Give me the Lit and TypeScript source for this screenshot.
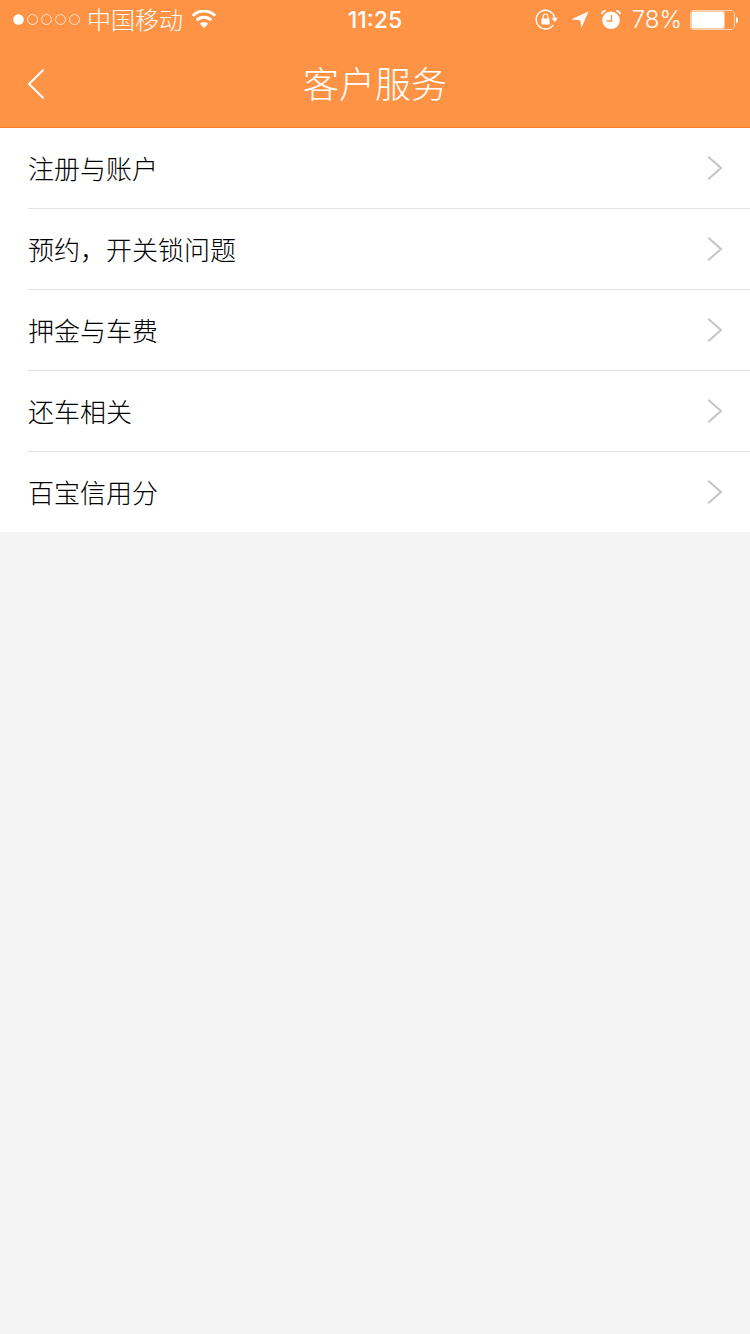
import { LitElement, html, css } from 'lit';
import { customElement, property, state } from 'lit/decorators.js';

@customElement('status-bar')
export class StatusBar extends LitElement {
  static styles = css`
    :host {
      display: grid;
      grid-template-columns: 1fr auto 1fr;
      align-items: center;
      height: 40px;
      padding: 0 12px;
      color: #fff;
      font-size: 24px;
      line-height: 40px;
    }

    .left,
    .right {
      display: flex;
      align-items: center;
    }

    .right {
      justify-content: flex-end;
    }

    .carrier {
      margin: 0 8px 0 6px;
      padding-bottom: 2px;
      font-family: "Noto Sans CJK SC", sans-serif;
      font-weight: 300;
      line-height: 38px;
    }

    .time {
      font-family: Inter, "Liberation Sans", sans-serif;
      font-size: 23px;
      font-weight: 500;
    }

    .percent {
      margin: 0 8px 0 11px;
      font-family: Inter, "Liberation Sans", sans-serif;
      font-weight: 300;
    }

    .arrow {
      margin: 0 12px;
    }

    svg {
      display: block;
      flex: none;
    }
  `;

  @property({ type: String })
  carrier = '';

  @property({ type: String })
  time = '';

  @property({ type: Number })
  battery = 100;

  render() {
    return html`
      <div class="left">
        <svg width="69" height="12" viewBox="0 0 69 12" fill="none" stroke="#fff" stroke-opacity="0.75">
          <circle cx="6.5" cy="5.5" r="5.3" fill="#fff" stroke="none" />
          <circle cx="20.5" cy="5.5" r="5" />
          <circle cx="34.5" cy="5.5" r="5" />
          <circle cx="48.5" cy="5.5" r="5" />
          <circle cx="62.5" cy="5.5" r="5" />
        </svg>
        <span class="carrier">${this.carrier}</span>
        <svg width="26" height="20" viewBox="0 0 26 20" fill="none" stroke="#fff" stroke-width="3">
          <path d="M1.7 5.7a16 16 0 0 1 22.6 0" />
          <path d="M5.7 10.2a10.4 10.4 0 0 1 14.6 0" />
          <path d="M13 18l-4.2-4.2a5.8 5.8 0 0 1 8.4 0z" fill="#fff" stroke="none" />
        </svg>
      </div>
      <span class="time">${this.time}</span>
      <div class="right">
        <svg width="24" height="22" viewBox="0 0 24 22">
          <path d="M18.2 15.8a9.3 9.3 0 1 1 1.3-7.3" fill="none" stroke="#fff" stroke-width="1.4" />
          <path d="M16.6 8.8h6.4l-3.2 4.4z" fill="#fff" />
          <rect x="6.4" y="9.4" width="8.2" height="6" rx="0.5" fill="#fff" />
          <path d="M8.2 9.8V7.3a2.3 2.3 0 0 1 4.6 0V9.8" fill="none" stroke="#fff" stroke-width="1.2" />
        </svg>
        <svg class="arrow" width="18" height="18" viewBox="0 0 18 18">
          <path d="M17.5 0.5L10.3 17L9.4 9.4L0.5 8.2z" fill="#fff" />
        </svg>
        <svg width="20" height="20" viewBox="0 0 20 20">
          <circle cx="10" cy="10.3" r="8.8" fill="#fff" />
          <path d="M0.8 4.2a4 4 0 0 1 4-3.4M15.2 0.8a4 4 0 0 1 4 3.4" fill="none" stroke="#fff" stroke-width="1.8" />
          <path d="M10.5 5v6H5.5" fill="none" stroke="#ff9345" stroke-width="1.4" />
        </svg>
        <span class="percent">${this.battery}%</span>
        <svg width="48" height="20" viewBox="0 0 48 20">
          <rect x="0.5" y="0.5" width="44" height="19" rx="3.5" fill="none" stroke="#fff" stroke-opacity="0.6" />
          <rect x="1.5" y="1.5" width=${Math.round(this.battery * 0.42)} height="17" rx="1.5" fill="#fff" />
          <path d="M46 7a3.4 3.4 0 0 1 0 6.4z" fill="#fff" />
        </svg>
      </div>
    `;
  }
}

@customElement('nav-header')
export class NavHeader extends LitElement {
  static styles = css`
    :host {
      display: grid;
      grid-template-columns: 72px 1fr 72px;
      align-items: center;
      height: 87px;
      border-bottom: 1px solid #f5802e;
      color: #fff;
    }

    button {
      display: flex;
      align-items: center;
      height: 88px;
      padding: 0 0 0 27px;
      border: 0;
      background: none;
      cursor: pointer;
    }

    h1 {
      margin: 0;
      padding-bottom: 4px;
      font-size: 36px;
      font-weight: 300;
      line-height: 80px;
      text-align: center;
    }
  `;

  @property({ type: String })
  heading = '';

  render() {
    return html`
      <button type="button" aria-label="返回" @click=${this._handleBack}>
        <svg width="18" height="30" viewBox="0 0 18 30" fill="none" stroke="#fff" stroke-width="2">
          <path d="M16.5 0.7L2 15L16.5 29.3" />
        </svg>
      </button>
      <h1>${this.heading}</h1>
    `;
  }

  private _handleBack() {
    this.dispatchEvent(new CustomEvent('nav-back', { bubbles: true, composed: true }));
  }
}

@customElement('app-root')
export class AppRoot extends LitElement {
  static styles = css`
    :host {
      display: block;
      min-height: 100vh;
      background: #f4f4f4;
      font-family: "Noto Sans CJK SC", "Liberation Sans", sans-serif;
    }

    header {
      background: #ff9345;
    }

    ul {
      margin: 0;
      padding: 0 0 0 28px;
      background: #fff;
      list-style: none;
    }

    li + li {
      border-top: 1px solid #e3e3e3;
    }

    a {
      display: flex;
      align-items: center;
      justify-content: space-between;
      height: 80px;
      padding-right: 27px;
      color: #000;
      font-size: 26px;
      font-weight: 300;
      text-decoration: none;
    }

    .title {
      padding-bottom: 2px;
    }
  `;

  @state()
  private _topics = [
    { id: 'account', title: '注册与账户' },
    { id: 'lock', title: '预约，开关锁问题' },
    { id: 'deposit', title: '押金与车费' },
    { id: 'return', title: '还车相关' },
    { id: 'credit', title: '百宝信用分' },
  ];

  render() {
    return html`
      <header>
        <status-bar carrier="中国移动" time="11:25" battery="78"></status-bar>
        <nav-header heading="客户服务"></nav-header>
      </header>
      <main>
        <ul>
          ${this._topics.map(
            (topic) => html`
              <li>
                <a href="#${topic.id}">
                  <span class="title">${topic.title}</span>
                  <svg width="16" height="24" viewBox="0 0 16 24" fill="none" stroke="#c4c4c6" stroke-width="2">
                    <path d="M1.2 0.8L14 12L1.2 23.2" />
                  </svg>
                </a>
              </li>
            `
          )}
        </ul>
      </main>
    `;
  }
}
